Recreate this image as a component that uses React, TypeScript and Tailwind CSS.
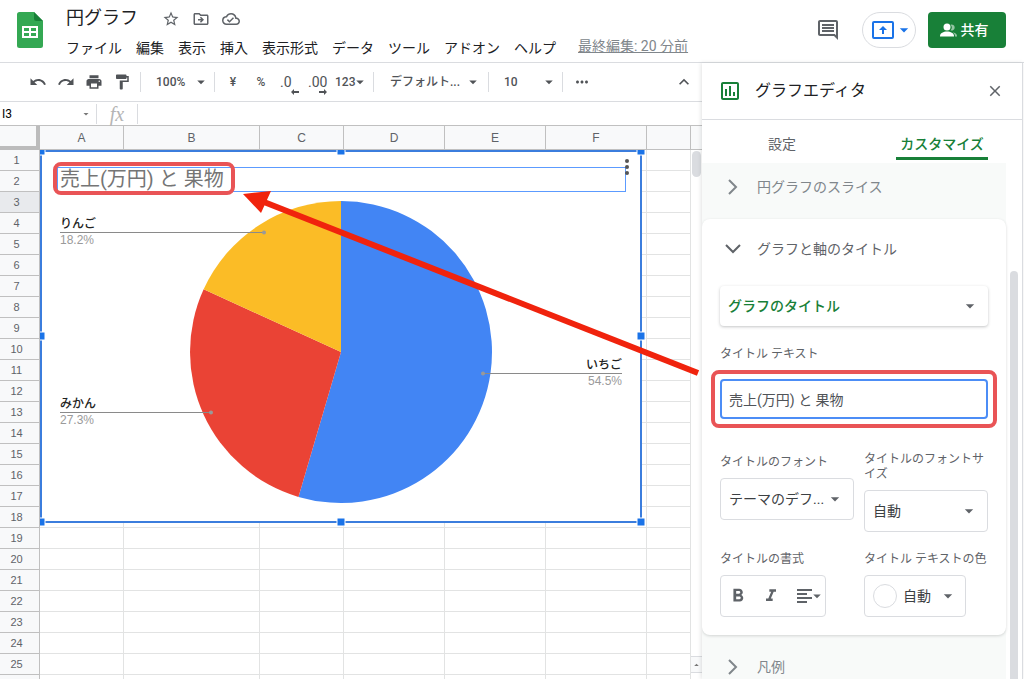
import React, { useState } from 'react';
import {
  MdArrowDropDown,
  MdArrowDropUp,
  MdClose,
  MdExpandLess,
  MdFormatBold,
  MdFormatItalic,
  MdFormatPaint,
  MdMoreHoriz,
  MdOutlineCloudDone,
  MdOutlineComment,
  MdOutlineDriveFileMove,
  MdOutlineInsertChart,
  MdPrint,
  MdRedo,
  MdStarBorder,
  MdUndo,
} from 'react-icons/md';

const menus = [
  'ファイル',
  '編集',
  '表示',
  '挿入',
  '表示形式',
  'データ',
  'ツール',
  'アドオン',
  'ヘルプ',
];

const columns = ['A', 'B', 'C', 'D', 'E', 'F', ''];
const rows = Array.from({ length: 25 }, (_, i) => i + 1);

const slices = [
  { name: 'いちご', value: 6, color: '#4285f4' },
  { name: 'みかん', value: 3, color: '#ea4335' },
  { name: 'りんご', value: 2, color: '#fbbc26' },
];

const labels = [
  { name: 'りんご', percent: '18.2%', from: 20, to: 224, y: 82 },
  { name: 'みかん', percent: '27.3%', from: 20, to: 171, y: 262 },
  { name: 'いちご', percent: '54.5%', from: 582, to: 443, y: 223 },
];

const handles = [
  [1, 1],
  [301, 1],
  [601, 1],
  [1, 186],
  [601, 186],
  [1, 372],
  [301, 372],
  [601, 372],
];

function slicePath(start: number, end: number) {
  const cx = 301;
  const cy = 202;
  const r = 151;
  const point = (t: number) =>
    `${cx + r * Math.sin(t * 2 * Math.PI)} ${cy - r * Math.cos(t * 2 * Math.PI)}`;
  const large = end - start > 0.5 ? 1 : 0;
  return `M${cx} ${cy} L${point(start)} A${r} ${r} 0 ${large} 1 ${point(end)} Z`;
}

function SheetsLogo() {
  return (
    <svg viewBox="0 0 26 36" className="h-9 w-[26px]" aria-hidden="true">
      <path d="M2.500 0H17l9 9v24.500a2.500 2.500 0 0 1-2.500 2.500h-21A2.500 2.500 0 0 1 0 33.500v-31A2.500 2.500 0 0 1 2.500 0Z" fill="#34a853" />
      <path d="M17 0l9 9h-6.500A2.500 2.500 0 0 1 17 6.500Z" fill="#188038" />
      <path
        d="M5 14h16v12H5Zm2 2v3h5v-3Zm7 0v3h5v-3Zm-7 5v3h5v-3Zm7 0v3h5v-3Z"
        fill="#fff"
        fillRule="evenodd"
      />
    </svg>
  );
}

function Header() {
  return (
    <header className="flex h-[63px] shrink-0 border-b border-[#dadce0] pl-[17px] pr-[18px] pt-3">
      <SheetsLogo />
      <div className="ml-[23px] flex-1">
        <div className="-mt-1 flex h-5 items-center text-[#5f6368]">
          <h1 className="mr-6 text-lg leading-5 text-[#202124]">円グラフ</h1>
          <div className="flex gap-3 pt-0.5">
            <button aria-label="スター" className="w-[18px]">
              <MdStarBorder size={18} />
            </button>
            <button aria-label="移動" className="w-[18px]">
              <MdOutlineDriveFileMove size={18} />
            </button>
            <button aria-label="ドキュメントのステータス" className="w-[18px]">
              <MdOutlineCloudDone size={18} />
            </button>
          </div>
        </div>
        <nav className="mt-2.5 flex gap-3.5 whitespace-nowrap text-sm text-[#202124]">
          {menus.map((menu) => (
            <button key={menu}>{menu}</button>
          ))}
          <a href="#history" className="-mt-0.5 ml-2 text-[#80868b] underline">
            最終編集: 20 分前
          </a>
        </nav>
      </div>
      <div className="flex h-9 items-center">
        <button aria-label="コメント履歴" className="mr-[22px] text-[#5f6368]">
          <MdOutlineComment size={24} />
        </button>
        <button
          aria-label="会議で画面を共有"
          className="mr-3 flex h-9 w-[54px] items-center justify-center rounded-full border border-[#dadce0] text-[#1a73e8]"
        >
          <svg viewBox="0 0 22 18" className="ml-2 h-[18px] w-[22px] shrink-0">
            <rect x="1" y="1" width="20" height="16" rx="1" fill="none" stroke="currentColor" strokeWidth="2" />
            <path d="M11 5l4 4h-3v4h-2V9H7Z" fill="currentColor" />
          </svg>
          <MdArrowDropDown size={20} />
        </button>
        <button className="flex h-9 w-[78px] items-center justify-center gap-1 rounded bg-[#188038] pr-1.5 text-sm font-medium text-white">
          <svg viewBox="0 0 17 14" className="h-3.5 w-[17px]" fill="currentColor" aria-hidden="true">
            <circle cx="7" cy="4" r="3.500" />
            <path d="M0 13c0-3 3.500-4.500 7-4.500s7 1.500 7 4.500v.5H0Z" />
            <path d="M10.500 7.200a3.500 3.500 0 0 0 0-5.500 3 3 0 1 1 0 5.500ZM12.500 9.300c2.500.4 4.500 1.700 4.500 3.700v.5h-2V13c0-1.500-1-2.800-2.500-3.700Z" opacity=".55" />
          </svg>
          共有
        </button>
      </div>
    </header>
  );
}

function Divider() {
  return <span className="h-5 w-px shrink-0 bg-[#dadce0]" />;
}

function DecimalButton({ text, label, right }: { text: string; label: string; right?: boolean }) {
  return (
    <button aria-label={label} className="relative w-7 pl-px text-left text-sm font-normal">
      {text}
      <svg
        viewBox="0 0 8 6"
        className="absolute right-2 bottom-[-3px] h-1.5 w-2"
        fill="currentColor"
      >
        <path d={right ? 'M8 3L5 0v2H0v2h5v2Z' : 'M0 3l3-3v2h5v2H3v2Z'} />
      </svg>
    </button>
  );
}

function ToolSelect({ label, value, className }: { label: string; value: string; className: string }) {
  return (
    <div className={`grid shrink-0 items-center ${className}`}>
      <select
        aria-label={label}
        defaultValue={value}
        className="col-start-1 row-start-1 w-full appearance-none bg-transparent outline-none"
      >
        <option>{value}</option>
      </select>
      <MdArrowDropDown size={18} className="pointer-events-none col-start-1 row-start-1 justify-self-end" />
    </div>
  );
}

function Toolbar() {
  return (
    <div className="flex h-[39px] shrink-0 items-center border-b border-[#dadce0] pl-[29px] pr-2 text-xs font-medium text-[#505357]">
      <div className="flex w-[111px] gap-2.5">
        <button aria-label="元に戻す">
          <MdUndo size={18} />
        </button>
        <button aria-label="やり直し">
          <MdRedo size={18} />
        </button>
        <button aria-label="印刷">
          <MdPrint size={18} />
        </button>
        <button aria-label="書式を貼り付け">
          <MdFormatPaint size={18} />
        </button>
      </div>
      <Divider />
      <ToolSelect label="ズーム" value="100%" className="ml-[15px] mr-1 w-[54px]" />
      <Divider />
      <button className="ml-1 w-7">¥</button>
      <button className="mr-1 w-7">%</button>
      <DecimalButton text=".0" label="小数点以下の桁数を減らす" />
      <DecimalButton text=".00" label="小数点以下の桁数を増やす" right />
      <button aria-label="表示形式の詳細" className="mr-1.5 flex w-8 items-center">
        123
        <MdArrowDropDown size={18} className="-ml-1 shrink-0" />
      </button>
      <Divider />
      <ToolSelect label="フォント" value="デフォルト..." className="ml-4 mr-1.5 w-[92px]" />
      <Divider />
      <ToolSelect label="フォントサイズ" value="10" className="ml-[15px] mr-1 w-[54px]" />
      <Divider />
      <button aria-label="その他" className="ml-2.5">
        <MdMoreHoriz size={18} />
      </button>
      <button aria-label="メニューを隠す" className="ml-auto">
        <MdExpandLess size={20} />
      </button>
    </div>
  );
}

function FormulaBar() {
  return (
    <div className="flex h-6 shrink-0 items-center border-b border-[#c0c0c0] pl-0.5 text-xs text-black">
      <input aria-label="名前ボックス" defaultValue="I3" className="w-[78px] outline-none" />
      <MdArrowDropDown size={12} className="mr-1 text-[#777]" />
      <Divider />
      <span className="w-10 text-center font-['Liberation_Serif',serif] text-xl leading-5 text-[#b5b5b5] italic">
        fx
      </span>
      <Divider />
      <input aria-label="数式" className="min-w-0 flex-1 px-2 outline-none" />
    </div>
  );
}

function PieChart({ title }: { title: string }) {
  const total = slices.reduce((sum, slice) => sum + slice.value, 0);
  let start = 0;

  return (
    <div className="absolute top-0 left-0 h-[373px] w-[602px] border-2 border-[#3b7ddd] bg-white">
      <svg className="absolute -top-0.5 -left-0.5 h-[380px] w-[610px] overflow-visible font-['Liberation_Sans','Noto_Sans_CJK_JP',sans-serif] text-xs">
        <rect x="17.5" y="17.5" width="568" height="24" fill="none" stroke="#5c9bff" />
        {slices.map((slice) => {
          const from = start;
          start += slice.value / total;
          return <path key={slice.name} d={slicePath(from, start)} fill={slice.color} />;
        })}
        {labels.map(({ name, percent, from, to, y }) => (
          <g key={name} textAnchor={from > to ? 'end' : 'start'}>
            <path d={`M${from} ${y}.5H${to}`} stroke="#8a8a8a" />
            <circle cx={to} cy={y + 0.5} r="2" fill="#999" />
            <text x={from} y={y - 4} fill="#222" className="font-medium">
              {name}
            </text>
            <text x={from} y={y + 12} fill="#9a9a9a">
              {percent}
            </text>
          </g>
        ))}
        <g fill="#555">
          <circle cx="587" cy="11" r="2" />
          <circle cx="587" cy="17" r="2" />
          <circle cx="587" cy="23" r="2" />
        </g>
        {handles.map(([x, y]) => (
          <rect key={`${x}-${y}`} x={x - 4} y={y - 4} width="8" height="8" fill="#1a73e8" stroke="#fff" />
        ))}
      </svg>
      <div className="absolute top-2.5 left-[11px] h-[33px] w-[182px] rounded-lg border-4 border-[#e95456] pt-0.5 pl-[3px] text-xl leading-[22px] whitespace-nowrap text-[#757575]">
        {title}
      </div>
    </div>
  );
}

function Sheet({ title }: { title: string }) {
  return (
    <div className="relative flex min-h-0 flex-1 overflow-hidden">
      <div className="min-w-0 flex-1">
        <table className="w-full table-fixed border-separate border-spacing-0 font-['Liberation_Sans',sans-serif] text-[#5f6368]">
          <colgroup>
            <col className="w-10" />
            <col className="w-[84px]" />
            <col className="w-[136px]" />
            <col className="w-[84px]" />
            <col className="w-[101px]" />
            <col className="w-[101px]" />
            <col className="w-[101px]" />
            <col />
          </colgroup>
          <thead>
            <tr className="h-6 bg-[#f8f9fa] text-xs leading-4">
              <td className="border-r-4 border-b-4 border-[#bcbcbc] p-0" />
              {columns.map((column, i) => (
                <th key={i} scope="col" className="border-r border-b border-[#c0c0c0] p-0 font-normal">
                  {column}
                </th>
              ))}
            </tr>
          </thead>
          <tbody>
            {rows.map((row) => (
              <tr key={row} className="h-[21px] text-[11px] leading-4">
                <th
                  scope="row"
                  className={`border-r border-b border-[#c0c0c0] py-0 pr-1.5 pl-0 font-normal ${
                    row === 3 ? 'bg-[#e8eaed]' : 'bg-[#f8f9fa]'
                  }`}
                >
                  {row}
                </th>
                {columns.map((_, i) => (
                  <td key={i} className="border-r border-b border-[#e2e3e3] p-0" />
                ))}
              </tr>
            ))}
            <tr className="h-[21px]">
              <td className="border-r border-[#c0c0c0] bg-[#f8f9fa] p-0" />
              {columns.map((_, i) => (
                <td key={i} className="border-r border-[#e2e3e3] p-0" />
              ))}
            </tr>
          </tbody>
        </table>
      </div>

      <div className="flex w-[11px] shrink-0 flex-col">
        <div className="h-6 shrink-0 border-b border-[#c0c0c0] bg-[#f8f9fa]" />
        <div className="mt-px ml-px h-[26px] w-[9px] rounded-full bg-[#dadce0]" />
        <div className="mt-auto mb-1.5 flex h-[17px] items-center justify-center border-y border-[#dadce0] bg-[#f8f9fa] text-[#777]">
          <MdArrowDropUp size={12} />
        </div>
      </div>

      {/* chart floats over the cells, clipped by the frozen headers */}
      <div className="pointer-events-none absolute top-6 right-0 bottom-0 left-10 overflow-hidden">
        <PieChart title={title} />
      </div>
      <svg className="pointer-events-none absolute top-0 left-0 h-full w-full">
        <path d="M698 247L264 76" stroke="#f0230d" strokeWidth="6" />
        <path d="M243 68l28-3-10 22Z" fill="#f0230d" />
      </svg>
    </div>
  );
}

interface FieldSelectProps {
  id: string;
  value: string;
  label?: string;
  className: string;
}

function FieldSelect({ id, value, label, className }: FieldSelectProps) {
  return (
    <div className={`grid items-center rounded ${className}`}>
      <select
        id={id}
        aria-label={label}
        defaultValue={value}
        className="col-start-1 row-start-1 h-full w-full appearance-none bg-transparent pl-2 text-sm outline-none"
      >
        <option>{value}</option>
      </select>
      <MdArrowDropDown
        size={20}
        className="pointer-events-none col-start-1 row-start-1 mr-2 justify-self-end text-[#5f6368]"
      />
    </div>
  );
}

function Chevron({ open }: { open?: boolean }) {
  return (
    <svg viewBox="0 0 16 16" className="h-4 w-4 shrink-0" fill="none" stroke="currentColor" strokeWidth="2">
      <path d={open ? 'M1 4l7 7 7-7' : 'M4 1l7 7-7 7'} />
    </svg>
  );
}

function CollapsedSection({ title }: { title: string }) {
  return (
    <button className="flex h-12 w-full shrink-0 items-center gap-4 pl-[23px] text-sm text-[#80868b]">
      <Chevron />
      {title}
    </button>
  );
}

function TitleSection({ title, setTitle }: { title: string; setTitle: (value: string) => void }) {
  return (
    <section className="shrink-0 rounded-lg bg-white px-[18px] pb-[18px] shadow-[0_1px_3px_rgba(60,64,67,0.2)]">
      <button className="flex h-[59px] w-full items-center gap-4 pl-[5px] text-sm text-[#5f6368]">
        <Chevron open />
        グラフと軸のタイトル
      </button>
      <FieldSelect
        id="title-type"
        label="タイトルの種類"
        value="グラフのタイトル"
        className="mt-2 h-10 font-medium text-[#188038] shadow-[0_1px_3px_rgba(60,64,67,0.3)]"
      />
      <label htmlFor="title-text" className="mt-5 block text-xs text-[#5f6368]">
        タイトル テキスト
      </label>
      <div className="-mx-[9px] mt-2 rounded-lg border-4 border-[#e95456] p-[5px]">
        <input
          id="title-text"
          value={title}
          onChange={(event) => setTitle(event.target.value)}
          className="block h-10 w-full rounded border-2 border-[#4c8df6] px-[7px] text-sm text-[#505357] outline-none"
        />
      </div>

      <div className="mt-6 grid grid-cols-[134fr_124fr] gap-x-2.5 gap-y-5 text-xs leading-[15px] text-[#5f6368]">
        <div>
          <label htmlFor="title-font" className="block pt-[3px]">
            タイトルのフォント
          </label>
          <FieldSelect
            id="title-font"
            value="テーマのデフ..."
            className="mt-2 h-[42px] border border-[#dadce0] text-[#3c4043]"
          />
        </div>
        <div>
          <label htmlFor="title-size" className="block">
            タイトルのフォントサイズ
          </label>
          <FieldSelect
            id="title-size"
            value="自動"
            className="mt-2 h-[42px] border border-[#dadce0] text-[#3c4043]"
          />
        </div>
        <div>
          <p>タイトルの書式</p>
          <div className="mt-2 flex h-[42px] w-[106px] items-center rounded border border-[#dadce0]">
            <button aria-label="太字" className="ml-1.5 flex w-[22px] justify-center">
              <MdFormatBold size={22} />
            </button>
            <button aria-label="斜体" className="mr-2 ml-3 flex w-[20px] justify-center">
              <MdFormatItalic size={22} />
            </button>
            <span className="h-6 w-px bg-[#dadce0]" />
            <button aria-label="配置" className="ml-2 flex items-center">
              <svg viewBox="0 0 15 14" className="h-3.5 w-[15px]" stroke="currentColor" strokeWidth="2">
                <path d="M0 1h15M0 5h10M0 9h15M0 13h10" />
              </svg>
              <MdArrowDropDown size={18} className="-ml-1" />
            </button>
          </div>
        </div>
        <div>
          <p>タイトル テキストの色</p>
          <button className="mt-2 flex h-[42px] w-[102px] items-center rounded border border-[#dadce0] pl-2 text-sm text-[#3c4043]">
            <span className="mr-1.5 h-6 w-6 rounded-full border border-[#dadce0]" />
            自動
            <MdArrowDropDown size={20} className="ml-auto mr-[7px] text-[#5f6368]" />
          </button>
        </div>
      </div>
    </section>
  );
}

function ChartEditor({ title, setTitle }: { title: string; setTitle: (value: string) => void }) {
  return (
    <aside className="z-10 mr-px flex w-[321px] shrink-0 flex-col border-r border-[#dadce0] bg-white shadow-[-1px_0_4px_rgba(60,64,67,0.15)]">
      <div className="flex h-[57px] shrink-0 items-center border-b border-[#dadce0] pr-[18px] pl-4">
        <MdOutlineInsertChart size={24} className="text-[#188038]" />
        <h2 className="ml-[13px] text-base text-[#202124]">グラフエディタ</h2>
        <button aria-label="閉じる" className="ml-auto text-[#5f6368]">
          <MdClose size={18} />
        </button>
      </div>
      <div role="tablist" className="flex h-[43px] shrink-0 text-sm text-[#5f6368]">
        <div className="flex flex-1 justify-center pb-[3px]">
          <button role="tab" aria-selected="false" className="w-[92px] pt-2">
            設定
          </button>
        </div>
        <div className="flex flex-1 justify-center pb-[3px]">
          <button
            role="tab"
            aria-selected="true"
            className="w-[92px] border-b-[3px] border-[#188038] pt-2.5 font-medium whitespace-nowrap text-[#188038]"
          >
            カスタマイズ
          </button>
        </div>
      </div>
      <div className="flex min-h-0 flex-1 overflow-hidden">
        <div className="flex min-w-0 flex-1 flex-col gap-2 bg-[#f8faf9]">
          <CollapsedSection title="円グラフのスライス" />
          <TitleSection title={title} setTitle={setTitle} />
          <CollapsedSection title="凡例" />
        </div>
        <div className="w-4 shrink-0 pt-[108px] pl-1">
          <div className="h-full w-2 rounded-t-full bg-[#dadce0]" />
        </div>
      </div>
    </aside>
  );
}

function App() {
  const [title, setTitle] = useState('売上(万円) と 果物');

  return (
    <div className="flex h-screen flex-col overflow-hidden bg-white font-['Roboto','Noto_Sans_CJK_JP',sans-serif]">
      <Header />
      <main className="flex min-h-0 flex-1">
        <div className="flex min-w-0 flex-1 flex-col">
          <Toolbar />
          <FormulaBar />
          <Sheet title={title} />
        </div>
        <ChartEditor title={title} setTitle={setTitle} />
      </main>
    </div>
  );
}

export default App;
